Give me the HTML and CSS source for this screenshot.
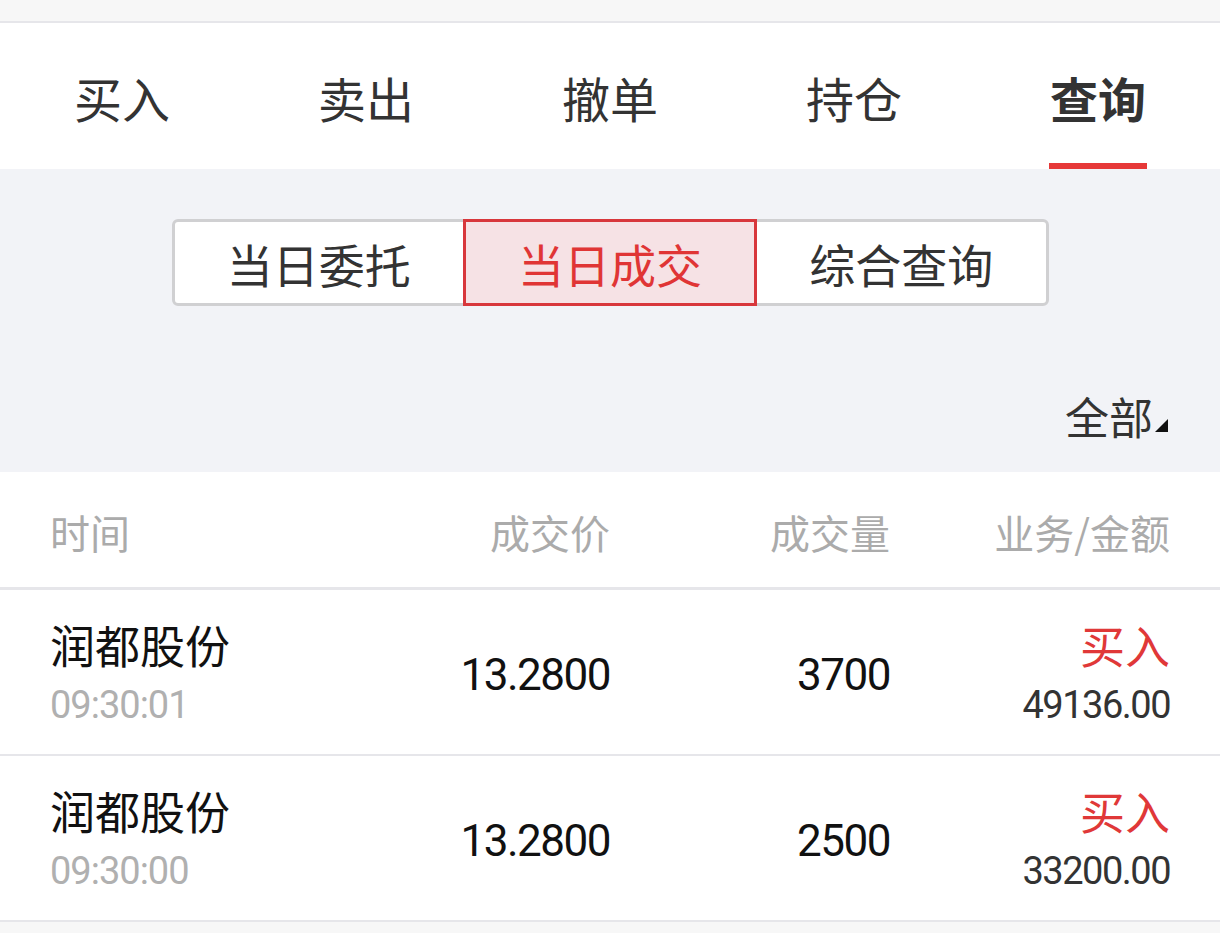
FILE: index.html
```html
<!DOCTYPE html>
<html lang="zh-CN">
<head>
<meta charset="utf-8">
<link rel="stylesheet" href="styles.css">
</head>
<body>
<div class="status"></div>
<nav class="tabs">
  <div class="tab">买入</div>
  <div class="tab">卖出</div>
  <div class="tab">撤单</div>
  <div class="tab">持仓</div>
  <div class="tab active">查询</div>
</nav>
<section class="panel">
  <div class="seg">
    <div class="seg-item">当日委托</div>
    <div class="seg-item on">当日成交</div>
    <div class="seg-item">综合查询</div>
  </div>
  <div class="filter"><span>全部</span><i class="tri"></i></div>
</section>
<section class="list">
  <div class="row head">
    <div class="c1">时间</div>
    <div class="c2">成交价</div>
    <div class="c3">成交量</div>
    <div class="c4">业务/金额</div>
  </div>
  <div class="row item">
    <div class="c1"><div class="name">润都股份</div><div class="time">09:30:01</div></div>
    <div class="c2 num">13.2800</div>
    <div class="c3 num">3700</div>
    <div class="c4"><div class="buy">买入</div><div class="amt">49136.00</div></div>
  </div>
  <div class="row item">
    <div class="c1"><div class="name">润都股份</div><div class="time">09:30:00</div></div>
    <div class="c2 num">13.2800</div>
    <div class="c3 num">2500</div>
    <div class="c4"><div class="buy">买入</div><div class="amt">33200.00</div></div>
  </div>
</section>
<div class="foot"></div>
</body>
</html>
```
FILE: styles.css
```css
* { box-sizing: border-box; }
html, body { margin: 0; padding: 0; }
body {
  width: 1220px;
  height: 933px;
  overflow: hidden;
  background: #f7f7f7;
  font-family: "Noto Sans CJK SC", "Noto Sans", sans-serif;
  color: #333;
}
.status {
  height: 23px;
  background: #f7f7f7;
  border-bottom: 2px solid #e6e6ea;
}
.tabs {
  display: flex;
  height: 146px;
  background: #fff;
}
.tab {
  flex: 1;
  display: flex;
  align-items: center;
  justify-content: center;
  font-size: 48px;
  color: #333;
  position: relative;
  padding-top: 2px;
}
.tab.active { font-weight: 700; }
.tab.active::after {
  content: "";
  position: absolute;
  bottom: 0;
  left: 50%;
  width: 98px;
  margin-left: -49px;
  height: 6px;
  background: #e63838;
}
.panel {
  background: #f2f3f7;
  height: 303px;
  padding-top: 50px;
  display: flex;
  flex-direction: column;
  align-items: center;
}
.seg {
  display: flex;
  width: 877px;
  height: 87px;
  border: 3px solid #d0d0d2;
  border-radius: 6px;
  background: #fff;
}
.seg-item {
  flex: 1;
  display: flex;
  align-items: center;
  justify-content: center;
  font-size: 46px;
  color: #333;
}
.seg-item.on {
  color: #e03535;
  background: #f6e2e5;
  border: 3px solid #d8373c;
  margin: -3px 0;
}
.filter {
  align-self: flex-end;
  margin-right: 52px;
  margin-top: 80px;
  display: flex;
  align-items: flex-end;
  font-size: 44px;
  color: #333;
  line-height: 60px;
}
.tri {
  width: 0;
  height: 0;
  border-left: 13px solid transparent;
  border-bottom: 13px solid #111;
  margin-left: 2px;
  margin-bottom: 14px;
}
.list { background: #fff; }
.row {
  display: flex;
  align-items: center;
  padding: 0 50px;
  border-bottom: 2px solid #e6e6ea;
}
.head {
  height: 118px;
  font-size: 40px;
  color: #ababab;
  border-bottom-width: 3px;
  padding-top: 4px;
}
.c1 { flex: 1; }
.c2 { width: 230px; text-align: right; }
.c3 { width: 280px; text-align: right; }
.c4 { width: 280px; text-align: right; }
.item { height: 166px; padding-top: 5px; }
.name {
  font-size: 45px;
  color: #111;
  line-height: 60px;
}
.time {
  font-family: "Roboto", sans-serif;
  font-size: 38px;
  color: #b0b0b0;
  line-height: 60px;
  letter-spacing: -1px;
}
.num {
  font-family: "Roboto", sans-serif;
  font-size: 44px;
  color: #111;
  letter-spacing: -1.5px;
}
.buy {
  font-size: 45px;
  color: #e03838;
  line-height: 60px;
}
.amt {
  font-family: "Roboto", sans-serif;
  font-size: 38px;
  color: #333;
  line-height: 60px;
  letter-spacing: -1.5px;
}
.foot { height: 20px; background: #f7f7f7; }
```
